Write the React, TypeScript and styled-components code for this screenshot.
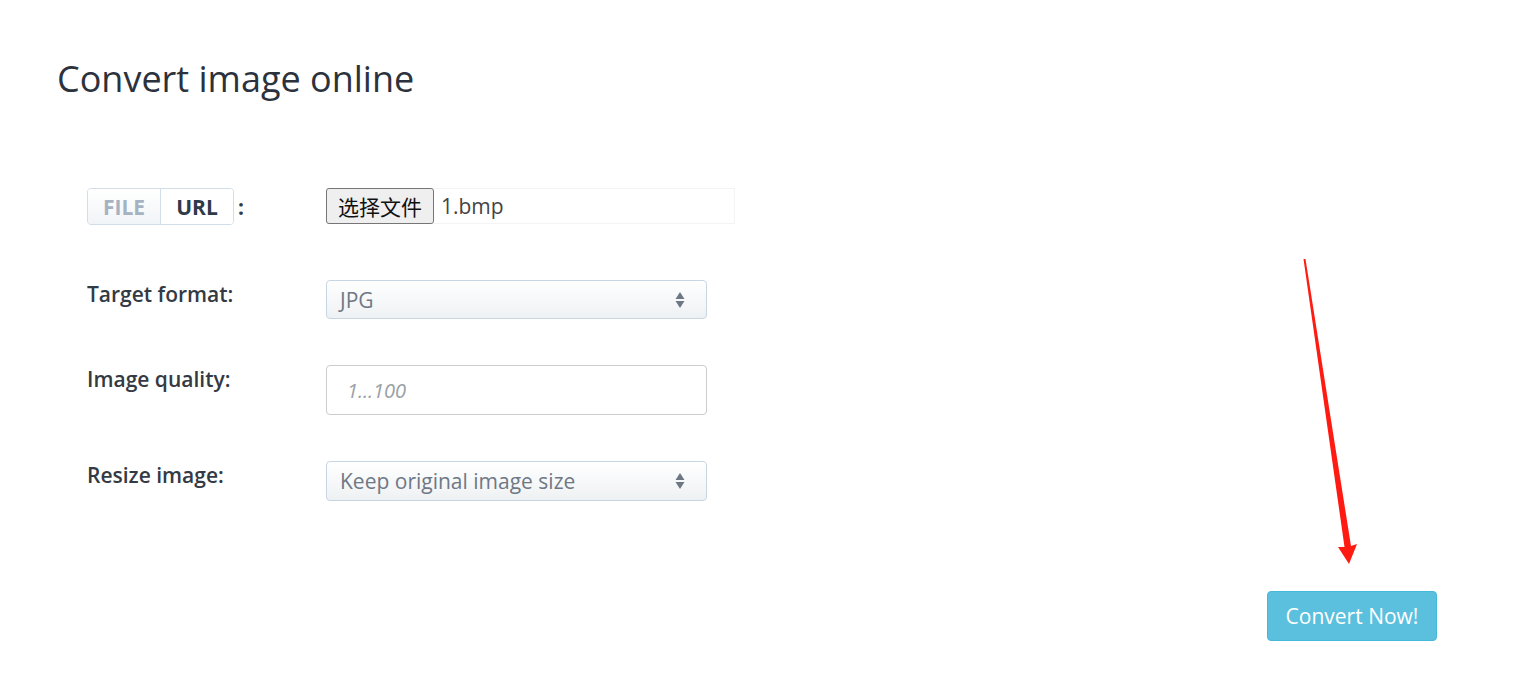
import React from 'react';
import styled, { createGlobalStyle } from 'styled-components';

const GlobalStyle = createGlobalStyle`
  html, body {
    margin: 0;
    padding: 0;
    background: #ffffff;
    font-family: "Open Sans", "Noto Sans", "Noto Sans CJK SC", sans-serif;
  }
`;

const Page = styled.div`
  position: relative;
  width: 1529px;
  height: 677px;
  box-sizing: border-box;
  padding: 57px 92px 0 57px;
  overflow: hidden;
`;

const Title = styled.h1`
  margin: 0;
  font-size: 36px;
  line-height: 43px;
  font-weight: 400;
  color: #2b323d;
`;

const Form = styled.div`
  display: flex;
  flex-direction: column;
  margin: 88px 0 0 30px;
`;

const Row = styled.div<{ gap: number }>`
  display: grid;
  grid-template-columns: 239px 410px;
  align-items: start;
  margin-bottom: ${(p) => p.gap}px;
`;

const Label = styled.label`
  font-size: 21px;
  line-height: 28px;
  font-weight: 600;
  color: #333a44;
`;

const SourceLabel = styled.div`
  display: flex;
  align-items: center;
  gap: 4px;
  font-size: 21px;
  font-weight: 700;
  color: #333a44;
`;

const Toggle = styled.div`
  display: flex;
  height: 37px;
  box-sizing: border-box;
  border: 1px solid #d3dde7;
  border-radius: 4px;
  overflow: hidden;
`;

const ToggleOption = styled.span<{ active?: boolean }>`
  display: flex;
  align-items: center;
  justify-content: center;
  width: 72px;
  font-size: 21px;
  font-weight: 700;
  color: ${(p) => (p.active ? '#a5b2c2' : '#2e3a4a')};
  background: ${(p) => (p.active ? 'linear-gradient(#ffffff, #f1f4f7)' : '#ffffff')};
  border-right: ${(p) => (p.active ? '1px solid #d3dde7' : 'none')};
`;

const FileBox = styled.div`
  display: flex;
  align-items: center;
  height: 36px;
  width: 409px;
  box-sizing: border-box;
  border: 1px solid #f4f4f4;
  border-left: none;
`;

const FileButton = styled.button`
  height: 36px;
  width: 108px;
  box-sizing: border-box;
  padding: 0;
  border: 1px solid #767676;
  border-radius: 3px;
  background: #efefef;
  font-family: "Noto Sans CJK SC", sans-serif;
  font-size: 21px;
  color: #111;
`;

const FileName = styled.span`
  margin-left: 7px;
  font-size: 21px;
  color: #444;
`;

const Select = styled.div<{ h: number }>`
  position: relative;
  display: flex;
  align-items: center;
  width: 381px;
  height: ${(p) => p.h}px;
  box-sizing: border-box;
  padding: 0 13px;
  border: 1px solid #c8d6e4;
  border-radius: 4px;
  background: linear-gradient(#ffffff, #eef1f3);
  font-size: 21px;
  color: #6e7885;
`;

const Caret = styled.svg`
  position: absolute;
  right: 21px;
  top: 50%;
  transform: translateY(-50%);
`;

const Input = styled.input`
  width: 381px;
  height: 50px;
  box-sizing: border-box;
  padding: 0 20px;
  border: 1px solid #cccccc;
  border-radius: 4px;
  font-family: "Open Sans", sans-serif;
  font-size: 20px;
  &::placeholder {
    color: #9aa0a6;
    font-style: italic;
  }
`;

const Actions = styled.div`
  display: flex;
  justify-content: flex-end;
  margin-top: 90px;
`;

const ConvertButton = styled.button`
  width: 170px;
  height: 50px;
  border: 1px solid #46b8da;
  border-radius: 4px;
  background: #5bc0de;
  color: #ffffff;
  font-family: "Open Sans", sans-serif;
  font-size: 21px;
`;

const Arrow = styled.svg`
  position: absolute;
  left: 0;
  top: 0;
  pointer-events: none;
`;

const Carets = () => (
  <Caret width="10" height="18" viewBox="0 0 10 18">
    <path d="M5 1 L9.5 8 L0.5 8 Z" fill="#6e7885" />
    <path d="M5 17 L9.5 10 L0.5 10 Z" fill="#6e7885" />
  </Caret>
);

export default function App() {
  return (
    <>
      <GlobalStyle />
      <Page>
        <Title>Convert image online</Title>
        <Form>
          <Row gap={55}>
            <SourceLabel>
              <Toggle>
                <ToggleOption active>FILE</ToggleOption>
                <ToggleOption>URL</ToggleOption>
              </Toggle>
              :
            </SourceLabel>
            <FileBox>
              <FileButton>选择文件</FileButton>
              <FileName>1.bmp</FileName>
            </FileBox>
          </Row>
          <Row gap={46}>
            <Label>Target format:</Label>
            <Select h={39}>
              JPG
              <Carets />
            </Select>
          </Row>
          <Row gap={46}>
            <Label>Image quality:</Label>
            <Input placeholder="1...100" />
          </Row>
          <Row gap={0}>
            <Label>Resize image:</Label>
            <Select h={40}>
              Keep original image size
              <Carets />
            </Select>
          </Row>
        </Form>
        <Actions>
          <ConvertButton>Convert Now!</ConvertButton>
        </Actions>
        <Arrow width="1529" height="677" viewBox="0 0 1529 677">
          <polygon
            points="1303.5,259 1305.5,259 1351,546 1357,544 1349,564 1338,547 1344.5,547"
            fill="#ff1a12"
          />
        </Arrow>
      </Page>
    </>
  );
}
